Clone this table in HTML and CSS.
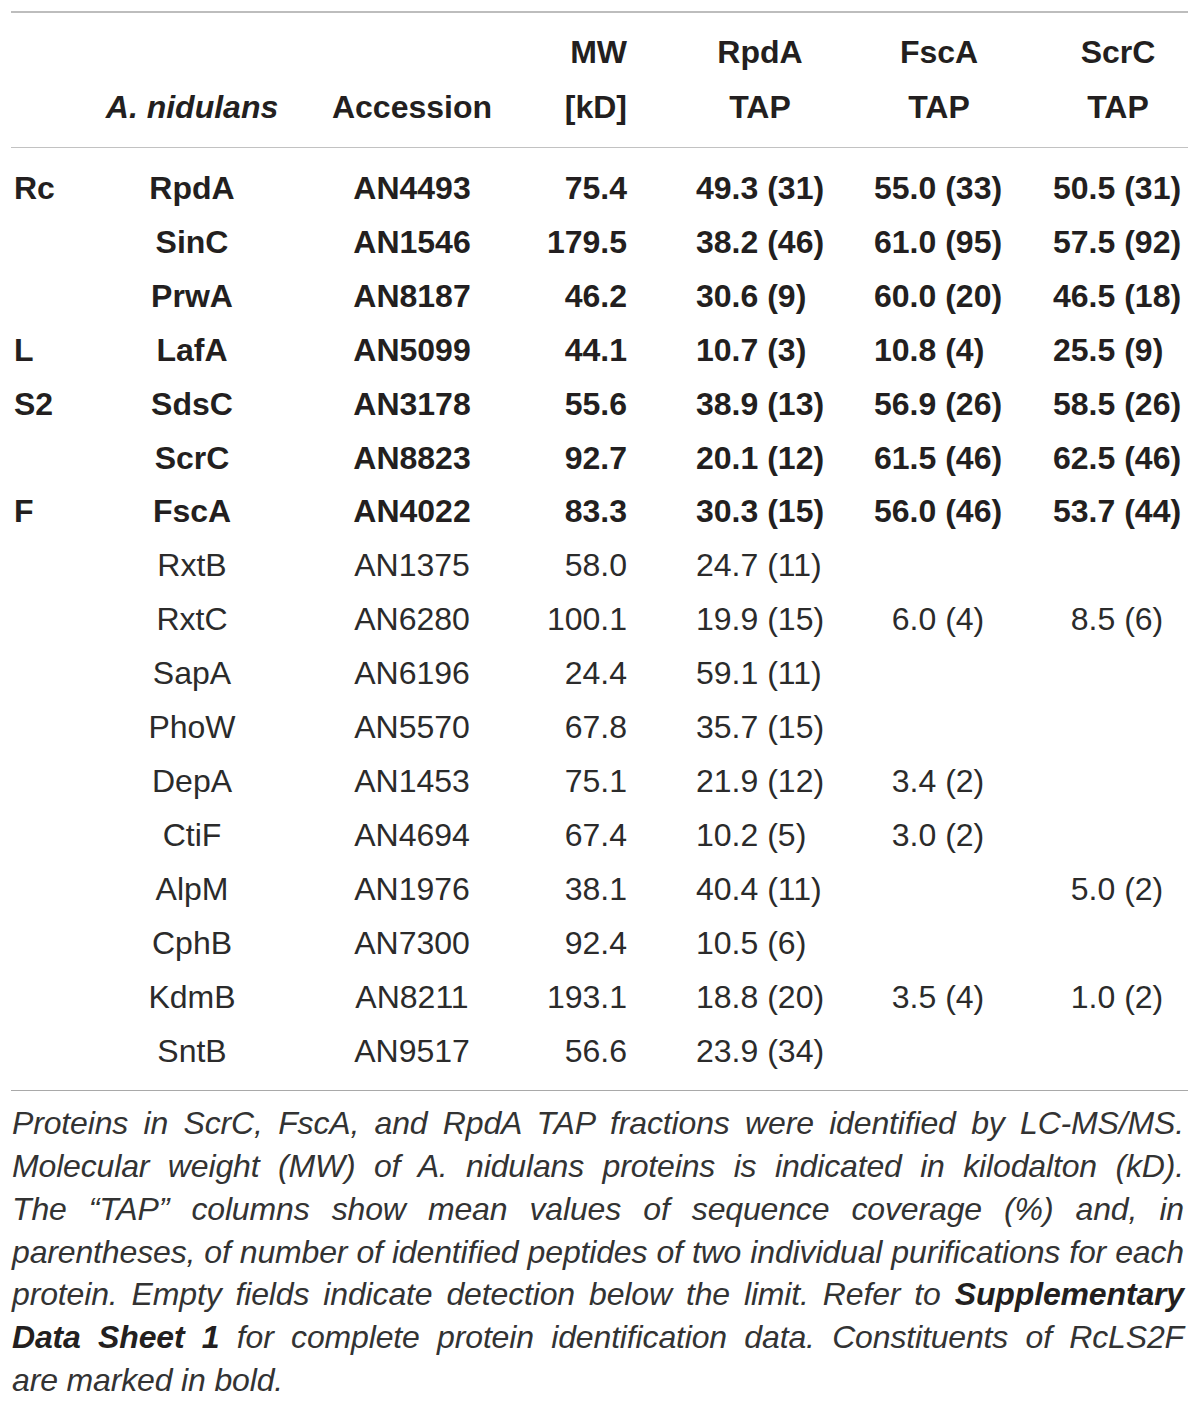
FILE: index.html
```html
<!DOCTYPE html>
<html lang="en">
<head>
<meta charset="utf-8">
<title>Table</title>
<link rel="stylesheet" href="styles.css">
</head>
<body>
<div class="page">
  <div class="table">
    <div class="head">
      <div class="c1"></div>
      <div class="c2"><i>A. nidulans</i></div>
      <div class="c3">Accession</div>
      <div class="c4">MW<br>[kD]</div>
      <div class="c5">RpdA<br>TAP</div>
      <div class="c6">FscA<br>TAP</div>
      <div class="c7">ScrC<br>TAP</div>
    </div>
    <div class="body">
      <div class="row b"><div class="c1">Rc</div><div class="c2">RpdA</div><div class="c3">AN4493</div><div class="c4">75.4</div><div class="c5">49.3 (31)</div><div class="c6">55.0 (33)</div><div class="c7">50.5 (31)</div></div>
      <div class="row b"><div class="c1"></div><div class="c2">SinC</div><div class="c3">AN1546</div><div class="c4">179.5</div><div class="c5">38.2 (46)</div><div class="c6">61.0 (95)</div><div class="c7">57.5 (92)</div></div>
      <div class="row b"><div class="c1"></div><div class="c2">PrwA</div><div class="c3">AN8187</div><div class="c4">46.2</div><div class="c5">30.6 (9)</div><div class="c6">60.0 (20)</div><div class="c7">46.5 (18)</div></div>
      <div class="row b"><div class="c1">L</div><div class="c2">LafA</div><div class="c3">AN5099</div><div class="c4">44.1</div><div class="c5">10.7 (3)</div><div class="c6">10.8 (4)</div><div class="c7">25.5 (9)</div></div>
      <div class="row b"><div class="c1">S2</div><div class="c2">SdsC</div><div class="c3">AN3178</div><div class="c4">55.6</div><div class="c5">38.9 (13)</div><div class="c6">56.9 (26)</div><div class="c7">58.5 (26)</div></div>
      <div class="row b"><div class="c1"></div><div class="c2">ScrC</div><div class="c3">AN8823</div><div class="c4">92.7</div><div class="c5">20.1 (12)</div><div class="c6">61.5 (46)</div><div class="c7">62.5 (46)</div></div>
      <div class="row b"><div class="c1">F</div><div class="c2">FscA</div><div class="c3">AN4022</div><div class="c4">83.3</div><div class="c5">30.3 (15)</div><div class="c6">56.0 (46)</div><div class="c7">53.7 (44)</div></div>
      <div class="row"><div class="c1"></div><div class="c2">RxtB</div><div class="c3">AN1375</div><div class="c4">58.0</div><div class="c5">24.7 (11)</div><div class="c6"></div><div class="c7"></div></div>
      <div class="row"><div class="c1"></div><div class="c2">RxtC</div><div class="c3">AN6280</div><div class="c4">100.1</div><div class="c5">19.9 (15)</div><div class="c6 one">6.0 (4)</div><div class="c7 one">8.5 (6)</div></div>
      <div class="row"><div class="c1"></div><div class="c2">SapA</div><div class="c3">AN6196</div><div class="c4">24.4</div><div class="c5">59.1 (11)</div><div class="c6"></div><div class="c7"></div></div>
      <div class="row"><div class="c1"></div><div class="c2">PhoW</div><div class="c3">AN5570</div><div class="c4">67.8</div><div class="c5">35.7 (15)</div><div class="c6"></div><div class="c7"></div></div>
      <div class="row"><div class="c1"></div><div class="c2">DepA</div><div class="c3">AN1453</div><div class="c4">75.1</div><div class="c5">21.9 (12)</div><div class="c6 one">3.4 (2)</div><div class="c7"></div></div>
      <div class="row"><div class="c1"></div><div class="c2">CtiF</div><div class="c3">AN4694</div><div class="c4">67.4</div><div class="c5">10.2 (5)</div><div class="c6 one">3.0 (2)</div><div class="c7"></div></div>
      <div class="row"><div class="c1"></div><div class="c2">AlpM</div><div class="c3">AN1976</div><div class="c4">38.1</div><div class="c5">40.4 (11)</div><div class="c6"></div><div class="c7 one">5.0 (2)</div></div>
      <div class="row"><div class="c1"></div><div class="c2">CphB</div><div class="c3">AN7300</div><div class="c4">92.4</div><div class="c5">10.5 (6)</div><div class="c6"></div><div class="c7"></div></div>
      <div class="row"><div class="c1"></div><div class="c2">KdmB</div><div class="c3">AN8211</div><div class="c4">193.1</div><div class="c5">18.8 (20)</div><div class="c6 one">3.5 (4)</div><div class="c7 one">1.0 (2)</div></div>
      <div class="row"><div class="c1"></div><div class="c2">SntB</div><div class="c3">AN9517</div><div class="c4">56.6</div><div class="c5">23.9 (34)</div><div class="c6"></div><div class="c7"></div></div>
    </div>
  </div>
  <div class="caption">
    <span class="ln">Proteins in ScrC, FscA, and RpdA TAP fractions were identified by LC-MS/MS.</span>
    <span class="ln">Molecular weight (MW) of A. nidulans proteins is indicated in kilodalton (kD).</span>
    <span class="ln">The “TAP” columns show mean values of sequence coverage (%) and, in</span>
    <span class="ln">parentheses, of number of identified peptides of two individual purifications for each</span>
    <span class="ln">protein. Empty fields indicate detection below the limit. Refer to <b>Supplementary</b></span>
    <span class="ln"><b>Data Sheet 1</b> for complete protein identification data. Constituents of RcLS2F</span>
    <span class="ln last">are marked in bold.</span>
  </div>
</div>
</body>
</html>
```

FILE: styles.css
```css
html, body {
  margin: 0;
  padding: 0;
  background: #ffffff;
}

body {
  font-family: "Liberation Sans", Arial, Helvetica, sans-serif;
  color: #231f20;
}

.page {
  width: 1177px;
  margin-left: 11px;
  padding-top: 11px;
}

.table {
  border-top: 2px solid #bdbdbd;
  border-bottom: 1px solid #a9a9a9;
  font-size: 32px;
}

.head,
.row {
  display: grid;
  grid-template-columns: 75px 212px 228px 114px 210px 180px 158px;
}

.head {
  font-weight: bold;
  line-height: 55px;
  padding: 12px 0 12px;
  border-bottom: 1px solid #c2c2c2;
  align-items: end;
}

.body {
  padding: 14px 0 12px;
}

.row {
  line-height: 53.9px;
  color: #2b2b2b;
}

.row.b {
  font-weight: bold;
  color: #231f20;
}

.c1 {
  padding-left: 3px;
  text-align: left;
}

.c2,
.c3 {
  text-align: center;
}

.c4 {
  text-align: right;
  padding-right: 13px;
}

.head .c5 {
  text-align: center;
  padding-left: 30px;
}

.head .c6 {
  text-align: center;
  padding-right: 2px;
}

.head .c7 {
  text-align: center;
  padding-left: 18px;
}

.row .c5 {
  padding-left: 56px;
}

.row .c6 {
  padding-left: 24px;
}

.row .c7 {
  padding-left: 23px;
}

.row .c6.one {
  padding-left: calc(24px + 0.556em);
}

.row .c7.one {
  padding-left: calc(23px + 0.556em);
}

.caption {
  padding: 11px 4px 0 1px;
  font-size: 32px;
  line-height: 42.7px;
  font-style: italic;
  color: #333333;
  letter-spacing: -0.15px;
}

.caption .ln {
  display: block;
  text-align: justify;
  text-align-last: justify;
  white-space: nowrap;
}

.caption .ln.last {
  text-align-last: left;
}

.caption b {
  color: #231f20;
}
```
